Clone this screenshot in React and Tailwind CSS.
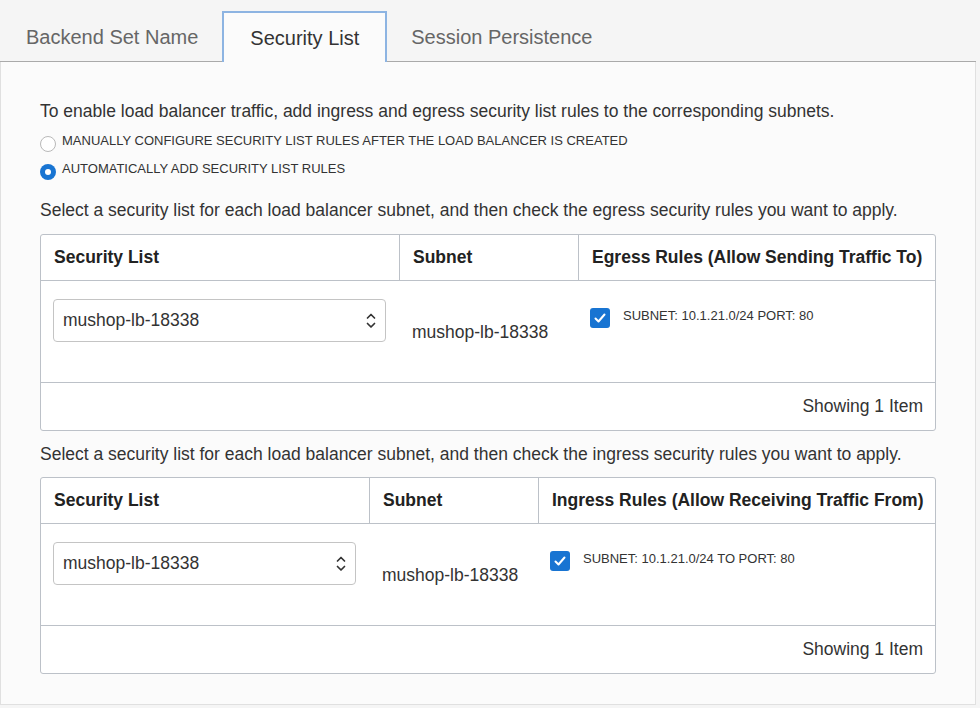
import { useState } from "react";

const TABS = ["Backend Set Name", "Security List", "Session Persistence"];

const Chevrons = () => (
  <svg width="10" height="16" viewBox="0 0 10 16" fill="none" stroke="#333" strokeWidth="1.7" strokeLinecap="round" strokeLinejoin="round">
    <polyline points="1.5,5 5,1.5 8.5,5" />
    <polyline points="1.5,10.5 5,14 8.5,10.5" />
  </svg>
);

const Radio = ({ checked, label, onClick }) => (
  <div className="flex h-[28px] items-center gap-[6px] cursor-pointer" onClick={onClick}>
    <span
      className={
        checked
          ? "mt-[5px] flex h-[16px] w-[16px] items-center justify-center rounded-full bg-[#1874d2]"
          : "mt-[5px] h-[16px] w-[16px] rounded-full border border-[#b9b9b9] bg-white"
      }
    >
      {checked && <span className="h-[6px] w-[6px] rounded-full bg-white" />}
    </span>
    <span className="text-[13px] uppercase text-[#333]">{label}</span>
  </div>
);

const RulesTable = ({ cols, selectWidth, heading, rule }) => (
  <div className="overflow-hidden rounded-[3px] border border-[#bcc1c8] bg-white">
    <div className={`grid ${cols} h-[46px] border-b border-[#bcc1c8]`}>
      <div className="flex items-center border-r border-[#bcc1c8] px-[13px] text-[17.5px] font-bold text-[#222]">Security List</div>
      <div className="flex items-center border-r border-[#bcc1c8] px-[13px] text-[17.5px] font-bold text-[#222]">Subnet</div>
      <div className="flex items-center px-[13px] text-[17.5px] font-bold text-[#222] whitespace-nowrap">{heading}</div>
    </div>
    <div className={`grid ${cols} h-[102px] border-b border-[#bcc1c8]`}>
      <div className="pl-[12px] pt-[18px]">
        <div className={`flex h-[43px] ${selectWidth} items-center justify-between rounded-[4px] border border-[#c4c4c4] bg-white pl-[9px] pr-[9px] text-[17.5px] text-[#333]`}>
          <span>mushop-lb-18338</span>
          <Chevrons />
        </div>
      </div>
      <div className="flex items-center pl-[12px] pt-[1px] text-[17.5px] text-[#333]">mushop-lb-18338</div>
      <div className="flex items-start gap-[13px] pl-[11px] pt-[27px]">
        <span className="flex h-[20px] w-[20px] shrink-0 items-center justify-center rounded-[3px] bg-[#1874d2]">
          <svg width="14" height="14" viewBox="0 0 14 14" fill="none" stroke="white" strokeWidth="2" strokeLinecap="round" strokeLinejoin="round">
            <polyline points="2.5,7.5 5.5,10.5 11.5,3.5" />
          </svg>
        </span>
        <span className="mt-[-2px] text-[13px] text-[#333]">{rule}</span>
      </div>
    </div>
    <div className="flex h-[47px] items-center justify-end pr-[12px] text-[17.5px] text-[#333]">Showing 1 Item</div>
  </div>
);

export default function App() {
  const [tab, setTab] = useState(1);
  const [auto, setAuto] = useState(true);

  return (
    <div className="h-[708px] w-[980px] bg-[#f5f5f5] font-['Liberation_Sans',Arial,sans-serif]">
      <div className="flex h-[62px] w-[976px] items-end border-b border-[#aaaaaa] pl-[2px]">
        {TABS.map((t, i) =>
          i === tab ? (
            <div
              key={t}
              className="mb-[-1px] flex h-[51px] cursor-pointer items-center border-2 border-b-0 border-[#8db4e2] bg-[#fbfbfb] px-[26px] text-[20px] text-[#333]"
            >
              {t}
            </div>
          ) : (
            <div
              key={t}
              onClick={() => setTab(i)}
              className="flex h-[50px] cursor-pointer items-center px-[24px] pt-[1px] text-[20px] text-[#666]"
            >
              {t}
            </div>
          )
        )}
      </div>

      <div className="h-[643px] w-[976px] border-x border-b border-[#e0e0e0] bg-[#fbfbfb] px-[39px] pt-[39px]">
        <p className="h-[20px] text-[17.5px] leading-[20px] text-[#333]">
          To enable load balancer traffic, add ingress and egress security list rules to the corresponding subnets.
        </p>
        <div className="mt-[6px]">
          <Radio checked={!auto} onClick={() => setAuto(false)} label="Manually configure security list rules after the load balancer is created" />
          <Radio checked={auto} onClick={() => setAuto(true)} label="Automatically add security list rules" />
        </div>
        <p className="mt-[17px] h-[20px] text-[17.5px] leading-[20px] text-[#333]">
          Select a security list for each load balancer subnet, and then check the egress security rules you want to apply.
        </p>
        <div className="mt-[14px]">
          <RulesTable
            cols="grid-cols-[359px_179px_1fr]"
            selectWidth="w-[333px]"
            heading="Egress Rules (Allow Sending Traffic To)"
            rule="SUBNET: 10.1.21.0/24 PORT: 80"
          />
        </div>
        <p className="mt-[13px] h-[20px] text-[17.5px] leading-[20px] text-[#333]">
          Select a security list for each load balancer subnet, and then check the ingress security rules you want to apply.
        </p>
        <div className="mt-[13px]">
          <RulesTable
            cols="grid-cols-[329px_169px_1fr]"
            selectWidth="w-[303px]"
            heading="Ingress Rules (Allow Receiving Traffic From)"
            rule="SUBNET: 10.1.21.0/24 TO PORT: 80"
          />
        </div>
      </div>
    </div>
  );
}
